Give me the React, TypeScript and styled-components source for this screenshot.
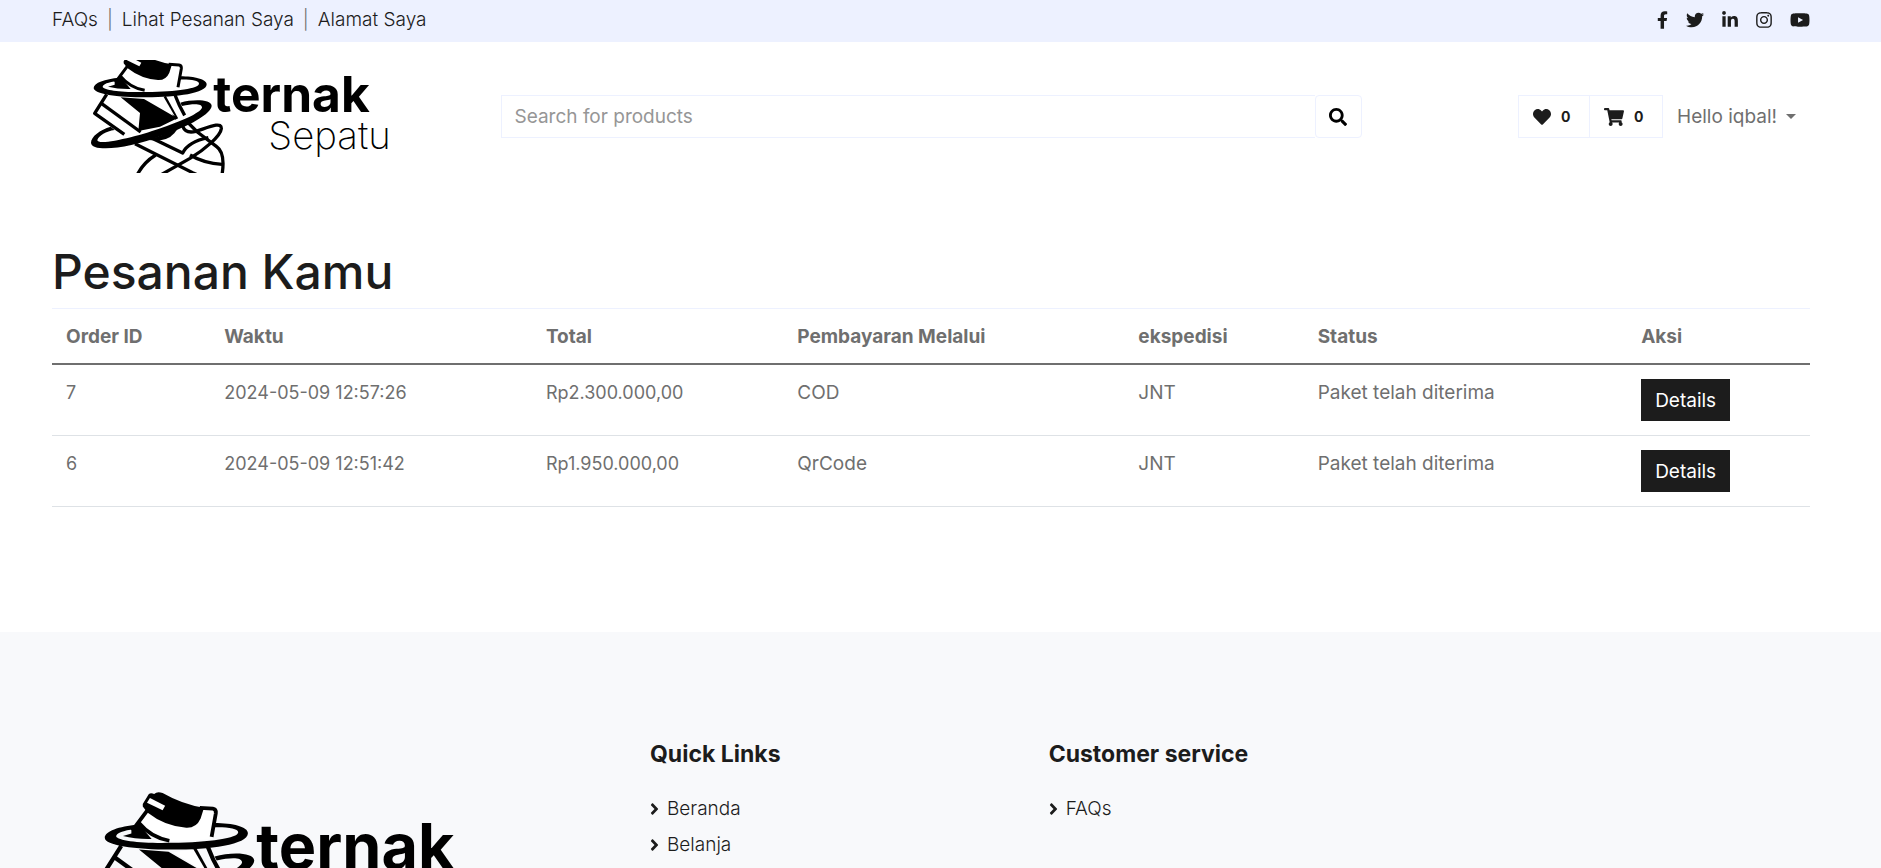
import React from 'react';
import styled, { createGlobalStyle } from 'styled-components';
import {
  FaAngleRight,
  FaFacebookF,
  FaHeart,
  FaInstagram,
  FaLinkedinIn,
  FaSearch,
  FaShoppingCart,
  FaTwitter,
  FaYoutube,
} from 'react-icons/fa';

const GlobalStyle = createGlobalStyle`
  *, *::before, *::after { box-sizing: border-box; }
  html { overflow-x: hidden; }
  body {
    margin: 0;
    background: #fff;
    color: #6f6f6f;
    font-family: Inter, "Liberation Sans", sans-serif;
    font-size: 19px;
    line-height: 27px;
  }
  a { color: #1c1c1c; text-decoration: none; }
  button, input { font: inherit; }
  h1, h2, ul { margin: 0; padding: 0; }
`;

const Shell = styled.div`
  padding: 0 71px 0 52px;
`;

const IconBox = styled.span<{ $width: number }>`
  display: flex;
  flex: none;
  width: ${({ $width }) => $width}px;
  height: 18px;

  svg { width: 100%; height: 100%; }
`;

const TopBar = styled(Shell)`
  display: flex;
  align-items: center;
  justify-content: space-between;
  height: 42px;
  padding-bottom: 3px;
  background: #edf1ff;
`;

const TopLinks = styled.nav`
  display: flex;
  gap: 9px;
  font-weight: 300;
`;

const SocialLinks = styled.div`
  display: flex;
  align-items: center;
  gap: 18px;
`;

const Header = styled(Shell)`
  display: grid;
  grid-template-columns: repeat(12, 1fr);
  column-gap: 36px;
  align-items: center;
  padding-top: 18px;
  padding-bottom: 18px;
`;

const LogoLink = styled.a`
  display: flex;
  grid-column: span 3;
`;

const LogoSvg = styled.svg<{ $width: number }>`
  display: block;
  width: ${({ $width }) => $width}px;
  max-width: 100%;
  height: auto;
`;

const SearchForm = styled.form`
  display: flex;
  grid-column: span 6;
  height: 43px;
`;

const SearchInput = styled.input`
  flex: 1;
  min-width: 0;
  padding: 0 13px;
  border: 1px solid #edf1ff;
  border-right: 0;
  outline: 0;
  background: #fff;
  color: #495057;

  &::placeholder { color: #969696; opacity: 1; }
`;

const SearchButton = styled.button`
  display: flex;
  align-items: center;
  justify-content: center;
  width: 47px;
  padding: 0;
  border: 1px solid #edf1ff;
  border-radius: 4px;
  background: transparent;
  color: #000;
`;

const Account = styled.div`
  display: flex;
  grid-column: span 3;
  align-items: center;
  justify-content: flex-end;
  padding-right: 14px;
`;

const CounterLink = styled.a`
  display: flex;
  align-items: center;
  gap: 10px;
  height: 43px;
  padding: 0 18px 0 14px;
  border: 1px solid #edf1ff;

  & + & { margin-left: -1px; }
`;

const Count = styled.span`
  width: 10px;
  font-size: 14px;
  font-weight: 700;
`;

const UserMenu = styled.button`
  display: flex;
  align-items: center;
  gap: 9px;
  margin-left: 14px;
  padding: 0;
  border: 0;
  background: none;
  color: inherit;

  &::after {
    content: "";
    border: 5px solid transparent;
    border-top-color: currentColor;
    border-bottom: 0;
  }
`;

const Main = styled(Shell).attrs({ as: 'main' })`
  padding-top: 52px;
  padding-bottom: 125px;
`;

const Title = styled.h1`
  margin-bottom: 7px;
  color: #1c1c1c;
  font-size: 48px;
  font-weight: 500;
  line-height: 58px;
`;

const Orders = styled.table`
  width: 100%;
  border-spacing: 0;
  table-layout: fixed;
  text-align: left;
`;

const Col = styled.col<{ $share: number }>`
  width: ${({ $share }) => $share}%;
`;

const HeadCell = styled.th`
  padding: 14px 14px 13px;
  border-top: 1px solid #edf1ff;
  border-bottom: 2px solid #6f6f6f;
  font-weight: 700;
`;

const Cell = styled.td<{ $numeric?: boolean }>`
  padding: 14px;
  border-bottom: 1px solid #dee2e6;
  font-size: ${({ $numeric }) => ($numeric ? 18 : 19)}px;
  vertical-align: top;
`;

const DetailsButton = styled.button`
  display: block;
  height: 42px;
  padding: 0 14px;
  border: 0;
  background: #1c1c1c;
  color: #fff;
`;

const Footer = styled(Shell).attrs({ as: 'footer' })`
  display: grid;
  grid-template-columns: repeat(12, 1fr);
  column-gap: 36px;
  padding-top: 109px;
  padding-bottom: 54px;
  background: #f8f9fb;
`;

const FooterBrand = styled.a`
  grid-column: span 4;
  padding-top: 36px;
`;

const FooterLinks = styled.div`
  display: grid;
  grid-template-columns: repeat(3, 1fr);
  grid-column: span 8;
  column-gap: 36px;
  align-items: start;
`;

const FooterHeading = styled.h2`
  margin-bottom: 27px;
  color: #1c1c1c;
  font-size: 23px;
  font-weight: 700;
  line-height: 27px;
`;

const FooterList = styled.ul`
  display: grid;
  gap: 9px;
  font-weight: 300;
  list-style: none;

  a { display: flex; align-items: center; gap: 8px; }
`;

/* Sneaker wrapped in two rings, followed by the two-line wordmark. */
function Logo({ width, viewBox }: { width: number; viewBox: string }) {
  return (
    <LogoSvg $width={width} viewBox={viewBox} role="img" aria-label="Sternak Sepatu">
      <g fill="none" stroke="#000" strokeWidth="10" strokeLinejoin="round">
        {/* sole and toe */}
        <path d="M80 133 44 190 133 253" />
        <path d="M64 160 182 246" />
        <path d="M165 281 338 368 372 384" />
        <path d="M210 262 308 309 C320 285 350 270 385 263" />
        <path d="M308 228 Q316 252 348 244 C385 232 425 213 424 236 C422 258 375 298 330 325 L245 373" />
        <path d="M324 218 352 246 410 290 Q438 310 425 380" />
        <path d="M330 315 Q372 340 426 343" />
        <path d="M172 374 Q190 338 227 315" />
        {/* laces */}
        <path d="M253 140 290 207" />
        <path d="M285 135 Q296 165 314 196" />
      </g>
      <path d="M122 142 192 147 292 205 240 230 175 243 180 189Z" />
      <path d="M203 148 251 141 284 198Z" fill="#fff" />
      <path d="M205 270 292 238 Q275 266 245 270 Q225 272 205 270Z" />
      {/* lower ring */}
      <path d="M92 230 C60 239 33 260 33 278 C33 308 150 296 240 259 C330 228 395 190 395 167 C393 148 340 147 301 158 L306 168 C340 160 367 160 366 173 C360 190 300 214 250 232 C180 258 52 290 52 270 C57 256 78 244 104 240Z" />
      {/* upper ring */}
      <path d="M300 79 C345 79 380 88 380 103 C380 130 290 142 200 142 C110 142 41 132 41 114 C41 98 75 87 118 83 L112 93 C85 97 68 102 68 111 C72 121 130 128 200 126 C290 125 357 115 357 101 C357 91 330 88 298 89Z" />
      {/* collar */}
      <path d="M144 52 122 80 Q150 112 195 121 L296 118 302 48 272 46Z" fill="#fff" />
      <path d="M104 92 122 82 152 117 Q115 118 84 110 L104 104Z" />
      <path
        d="M144 46 106 97 M122 79 Q150 113 194 121 M266 43 L297 45 Q305 46 304 56 L294 112"
        fill="none"
        stroke="#000"
        strokeWidth="9"
      />
      <path d="M131 34 145 11 Q149 7 158 10 Q165 4 178 8 Q225 35 276 43 L268 68 Q258 91 234 90 Q184 87 142 54 L131 40Z" />
      <path d="M148 20 184 38 178 49 141 31Z" fill="#fff" />
      <text x="400" y="187" fontFamily="Inter, sans-serif" fontSize="149" fontWeight="700">
        ternak
      </text>
      <text x="565" y="296" fontFamily="Inter, sans-serif" fontSize="115" fontWeight="200">
        Sepatu
      </text>
    </LogoSvg>
  );
}

const socials = [
  { name: 'Facebook', Icon: FaFacebookF, width: 11 },
  { name: 'Twitter', Icon: FaTwitter, width: 18 },
  { name: 'LinkedIn', Icon: FaLinkedinIn, width: 16 },
  { name: 'Instagram', Icon: FaInstagram, width: 16 },
  { name: 'YouTube', Icon: FaYoutube, width: 20 },
];

const columns = [
  { label: 'Order ID', share: 9 },
  { label: 'Waktu', share: 18.3 },
  { label: 'Total', share: 14.3 },
  { label: 'Pembayaran Melalui', share: 19.4 },
  { label: 'ekspedisi', share: 10.2 },
  { label: 'Status', share: 18.4 },
  { label: 'Aksi', share: 10.4 },
];

const orders = [
  { id: 7, time: '2024-05-09 12:57:26', total: 'Rp2.300.000,00', payment: 'COD' },
  { id: 6, time: '2024-05-09 12:51:42', total: 'Rp1.950.000,00', payment: 'QrCode' },
];

const footerGroups = [
  { title: 'Quick Links', links: ['Beranda', 'Belanja'] },
  { title: 'Customer service', links: ['FAQs'] },
];

export default function App() {
  return (
    <>
      <GlobalStyle />
      <TopBar>
        <TopLinks>
          <a href="#faqs">FAQs</a>
          <span>|</span>
          <a href="#pesanan">Lihat Pesanan Saya</a>
          <span>|</span>
          <a href="#alamat">Alamat Saya</a>
        </TopLinks>
        <SocialLinks>
          {socials.map(({ name, Icon, width }) => (
            <a key={name} href={`#${name.toLowerCase()}`} aria-label={name}>
              <IconBox $width={width}>
                <Icon />
              </IconBox>
            </a>
          ))}
        </SocialLinks>
      </TopBar>

      <Header as="header">
        <LogoLink href="#beranda">
          <Logo width={360} viewBox="-84 30 1080 339" />
        </LogoLink>
        <SearchForm role="search" onSubmit={(e) => e.preventDefault()}>
          <SearchInput type="text" placeholder="Search for products" aria-label="Search for products" />
          <SearchButton type="submit" aria-label="Search">
            <FaSearch size={18} />
          </SearchButton>
        </SearchForm>
        <Account>
          <CounterLink href="#wishlist" aria-label="Wishlist">
            <IconBox $width={18}>
              <FaHeart />
            </IconBox>
            <Count>0</Count>
          </CounterLink>
          <CounterLink href="#cart" aria-label="Cart">
            <IconBox $width={20}>
              <FaShoppingCart />
            </IconBox>
            <Count>0</Count>
          </CounterLink>
          <UserMenu type="button">Hello iqbal!</UserMenu>
        </Account>
      </Header>

      <Main>
        <Title>Pesanan Kamu</Title>
        <Orders>
          <colgroup>
            {columns.map(({ label, share }) => (
              <Col key={label} $share={share} />
            ))}
          </colgroup>
          <thead>
            <tr>
              {columns.map(({ label }) => (
                <HeadCell key={label} scope="col">{label}</HeadCell>
              ))}
            </tr>
          </thead>
          <tbody>
            {orders.map((order) => (
              <tr key={order.id}>
                <Cell $numeric>{order.id}</Cell>
                <Cell $numeric>{order.time}</Cell>
                <Cell $numeric>{order.total}</Cell>
                <Cell>{order.payment}</Cell>
                <Cell>JNT</Cell>
                <Cell>Paket telah diterima</Cell>
                <Cell>
                  <DetailsButton type="button">Details</DetailsButton>
                </Cell>
              </tr>
            ))}
          </tbody>
        </Orders>
      </Main>

      <Footer>
        <FooterBrand href="#beranda">
          <Logo width={456} viewBox="-84 -30 1080 450" />
        </FooterBrand>
        <FooterLinks>
          {footerGroups.map(({ title, links }) => (
            <div key={title}>
              <FooterHeading>{title}</FooterHeading>
              <FooterList>
                {links.map((link) => (
                  <li key={link}>
                    <a href={`#${link.toLowerCase()}`}>
                      <IconBox $width={9}>
                        <FaAngleRight />
                      </IconBox>
                      {link}
                    </a>
                  </li>
                ))}
              </FooterList>
            </div>
          ))}
        </FooterLinks>
      </Footer>
    </>
  );
}
